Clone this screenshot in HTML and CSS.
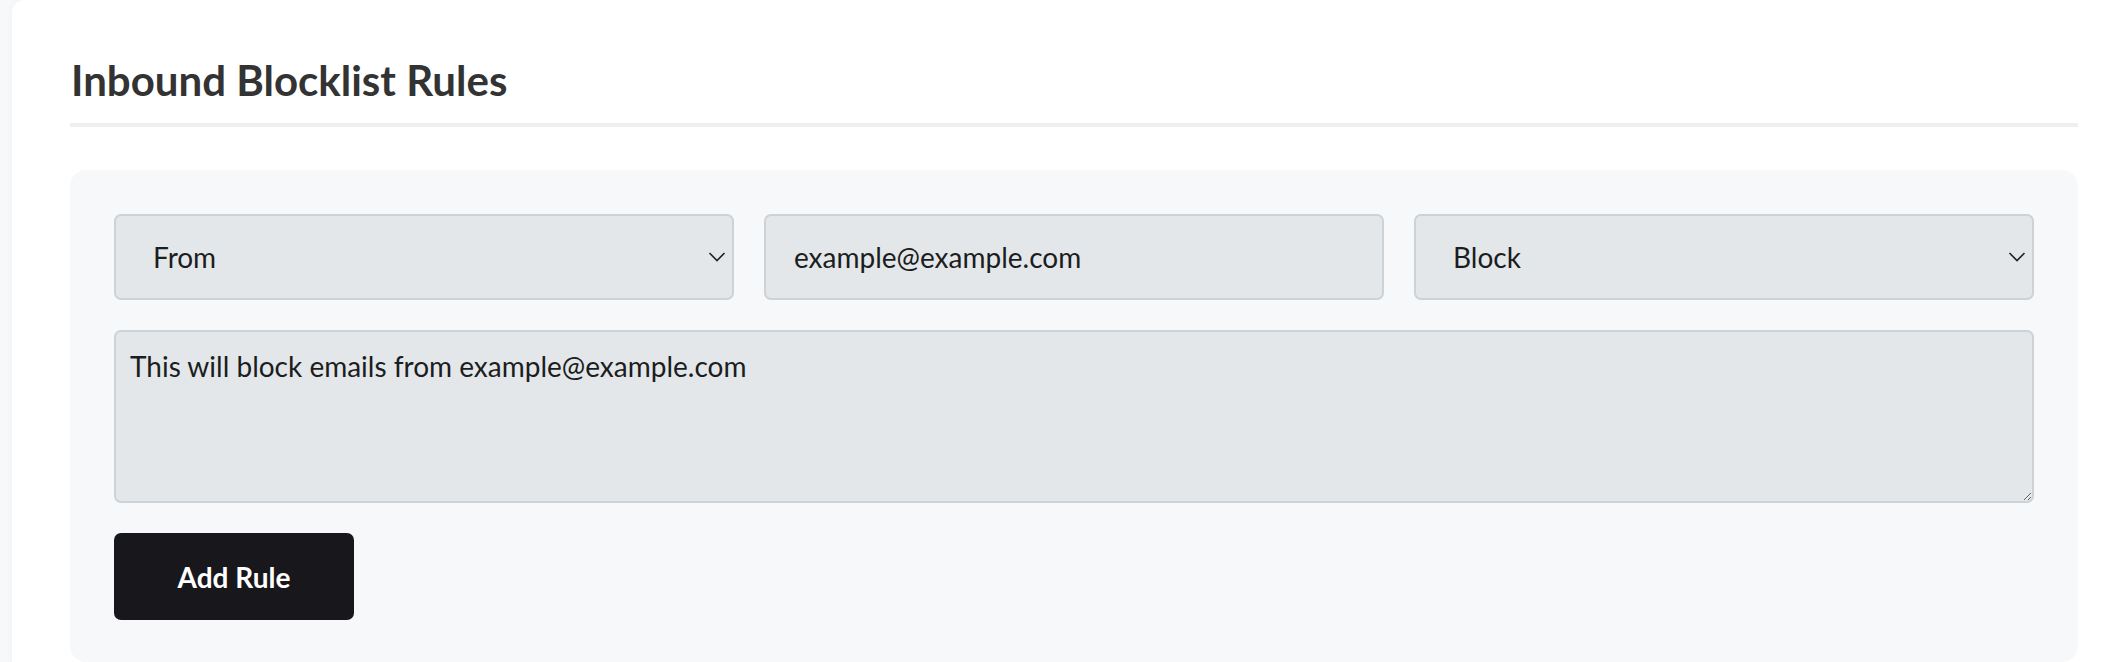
FILE: index.html
```html
<!DOCTYPE html>
<html lang="en">
<head>
<meta charset="utf-8">
<title>Inbound Blocklist Rules</title>
<link rel="stylesheet" href="styles.css">
</head>
<body>
<div class="page">
  <section class="card">
    <h2 class="card-title">Inbound Blocklist Rules</h2>
    <div class="rule-panel">
      <div class="field-row">
        <div class="select-wrap">
          <select class="field select-field">
            <option>From</option>
            <option>To</option>
            <option>Subject</option>
          </select>
          <svg class="chevron" width="18" height="12" viewBox="0 0 18 12" aria-hidden="true"><path d="M1.5 2 L9 9.5 L16.5 2" fill="none" stroke="#222" stroke-width="1.6"/></svg>
        </div>
        <input class="field text-field" type="text" value="example@example.com">
        <div class="select-wrap">
          <select class="field select-field">
            <option>Block</option>
            <option>Allow</option>
          </select>
          <svg class="chevron" width="18" height="12" viewBox="0 0 18 12" aria-hidden="true"><path d="M1.5 2 L9 9.5 L16.5 2" fill="none" stroke="#222" stroke-width="1.6"/></svg>
        </div>
      </div>
      <textarea class="field note-field">This will block emails from example@example.com</textarea>
      <div class="actions">
        <button class="btn-add" type="button">Add Rule</button>
      </div>
    </div>
  </section>
</div>
</body>
</html>
```

FILE: styles.css
```css
html, body {
  margin: 0;
  padding: 0;
  background: #f7f8f9;
  overflow: hidden;
}

body {
  font-family: "Lato", "Liberation Sans", sans-serif;
  color: #212529;
}

.page {
  padding-left: 12px;
}

.card {
  background: #ffffff;
  border-radius: 12px 12px 0 0;
  box-shadow: 0 0 6px rgba(0, 0, 0, 0.04);
  margin-right: -10px;
  padding: 48px 58px 0 58px;
}

.card-title {
  margin: 0;
  font-family: "Lato", "Liberation Sans", sans-serif;
  font-weight: 700;
  font-size: 42px;
  line-height: 64px;
  color: #333333;
  padding-bottom: 11px;
  border-bottom: 4px solid #eeeff0;
  padding-left: 1px;
}

.rule-panel {
  margin-top: 43px;
  background: #f7f8f9;
  border-radius: 16px;
  padding: 44px 44px 42px 44px;
  display: flex;
  flex-direction: column;
  gap: 30px;
}

.field-row {
  display: grid;
  grid-template-columns: 1fr 1fr 1fr;
  gap: 30px;
}

.field {
  box-sizing: border-box;
  font-family: "Lato", "Liberation Sans", sans-serif;
  font-size: 28px;
  color: #1b1d20;
  background: #e4e7ea;
  border: 2px solid #cdd2d7;
  border-radius: 7px;
  outline: none;
  margin: 0;
}

.select-wrap {
  position: relative;
}

.select-field {
  -webkit-appearance: none;
  appearance: none;
  width: 100%;
  height: 86px;
  padding: 0 40px 0 37px;
}

.chevron {
  position: absolute;
  right: 8px;
  top: 37px;
  pointer-events: none;
}

.text-field {
  width: 100%;
  height: 86px;
  padding: 0 20px 0 28px;
}

.note-field {
  display: block;
  width: 100%;
  height: 173px;
  padding: 13px 14px 12px 14px;
  line-height: 1.5;
  resize: vertical;
}

.actions {
  display: flex;
}

.btn-add {
  width: 240px;
  height: 87px;
  border: none;
  border-radius: 7px;
  background: #18181c;
  color: #ffffff;
  font-family: "Lato", "Liberation Sans", sans-serif;
  font-weight: 700;
  font-size: 28px;
  cursor: pointer;
}
```
